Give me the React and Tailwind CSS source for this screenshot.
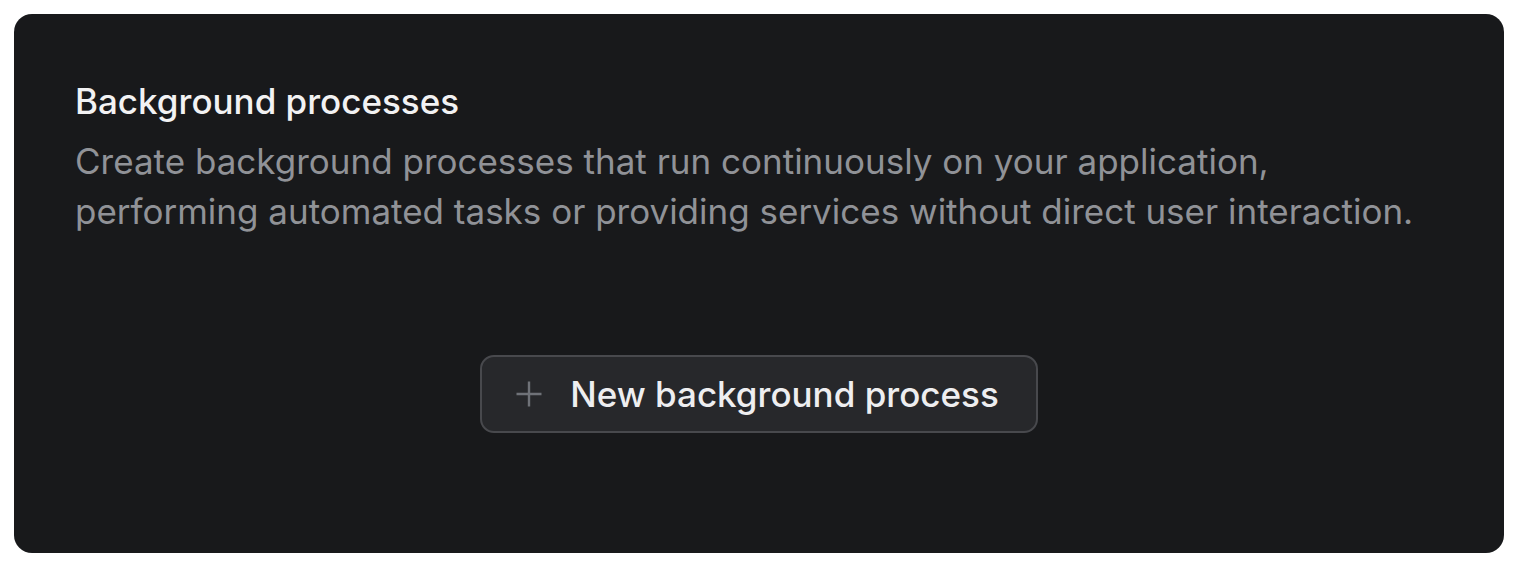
import React from 'react';

const PlusIcon = () => (
    <svg width="26" height="26" viewBox="0 0 26 26" fill="none" stroke="#6f7278" strokeWidth="2.4">
        <path d="M13 0.5v25M0.5 13h25" />
    </svg>
);

const App = () => {
    return (
        <div className="min-h-screen bg-white pt-[14px] pl-[14px] pr-[12px]" style={{ fontFamily: 'Inter, "Noto Sans", sans-serif' }}>
            <div className="h-[539px] rounded-[18px] bg-[#18191b] px-[61px] pt-[62px] flex flex-col">
                <h2 className="text-[35px] leading-[50px] font-medium text-[#f2f2f3]">Background processes</h2>
                <p className="mt-[10px] text-[35px] leading-[50px] text-[#909297]">
                    Create background processes that run continuously on your application,
                    <br />
                    performing automated tasks or providing services without direct user interaction.
                </p>
                <div className="flex justify-center mt-[119px]">
                    <button className="flex items-center gap-[28px] h-[78px] pl-[34px] pr-[37px] rounded-[14px] border-2 border-[#48494d] bg-[#27282b] text-[35px] font-medium text-[#eeeef0]">
                        <PlusIcon />
                        New background process
                    </button>
                </div>
            </div>
        </div>
    );
};

export default App;
